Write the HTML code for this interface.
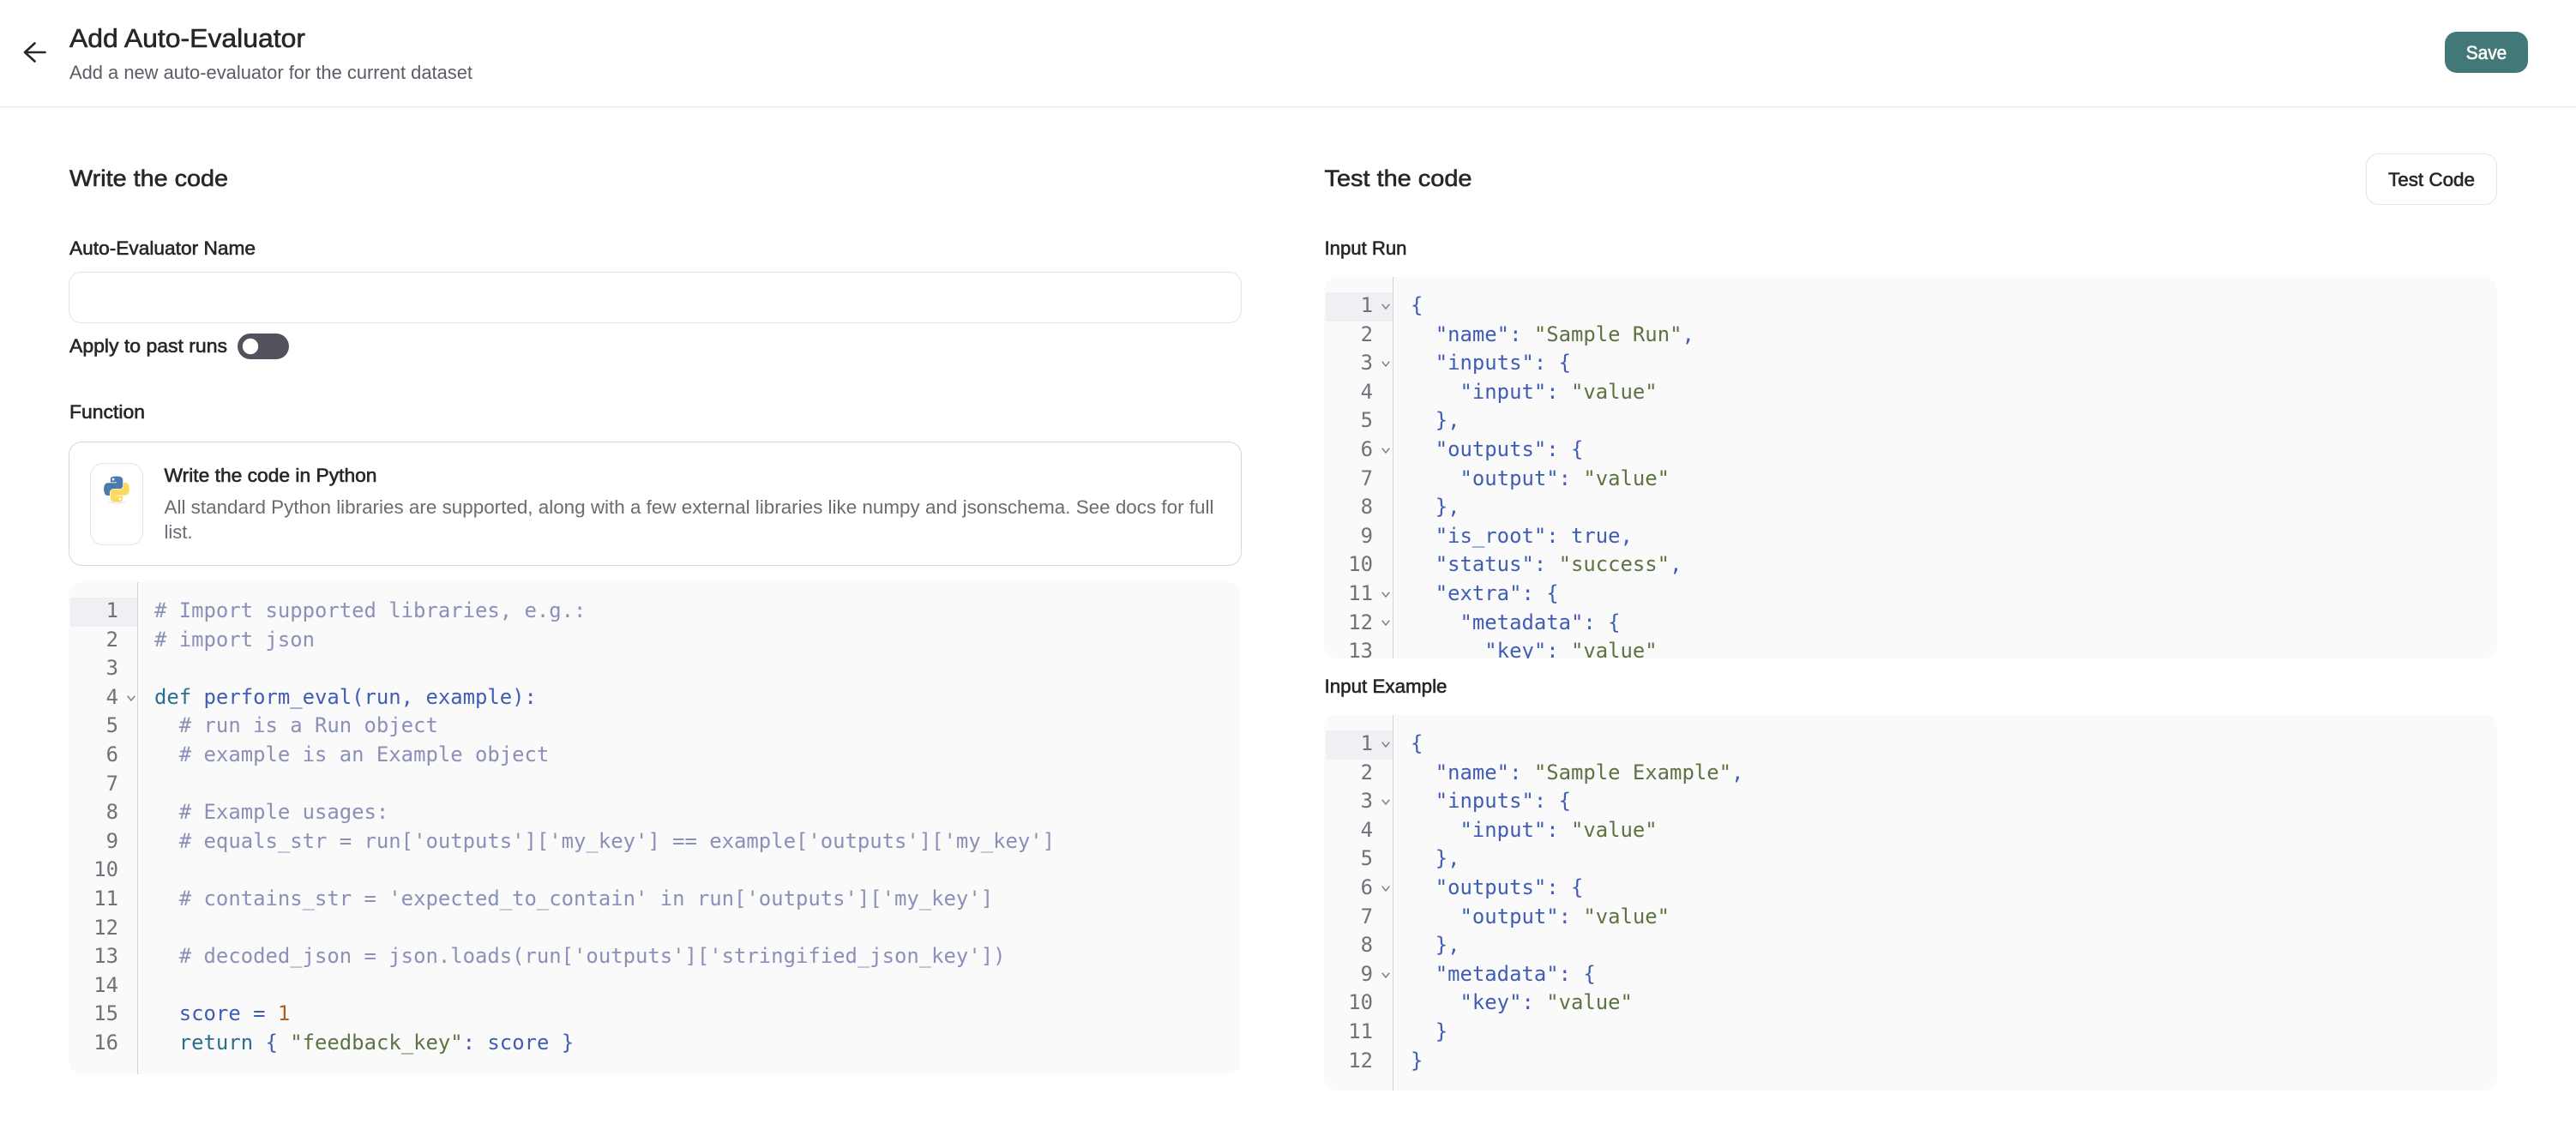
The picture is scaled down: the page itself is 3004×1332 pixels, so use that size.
<!DOCTYPE html>
<html><head><meta charset="utf-8"><title>Add Auto-Evaluator</title>
<style>
html,body{margin:0;padding:0;background:#fff;width:3004px;height:1332px;overflow:hidden}
svg.s{position:absolute;left:0;top:0}
svg text{font-family:"Liberation Sans",sans-serif;}
.m{stroke-width:.6px;paint-order:stroke}
.ed{position:absolute;background:#fafafa;border-radius:15px;overflow:hidden}
.gb{position:absolute;top:0;bottom:0;width:1px;background:#d4d4d8}
.al{position:absolute;height:34px;background:#f0f0f4}
pre{position:absolute;margin:0;font:23.9px/33.6px "DejaVu Sans Mono","Liberation Mono",monospace;white-space:pre}
.n{color:#71717a;text-align:right}
.c{color:#8a90b8}.f{color:#3f5db5}.k{color:#2b6f8f}.s1{color:#5d7344}.o{color:#b0611f}.p{color:#3f5db5}.b{color:#3f5db5}
.ch{position:absolute;width:10px;height:7px}
</style></head><body>

<div class="ed" style="left:80px;top:679px;width:1367px;height:574px">
 <div class="al" style="left:2px;top:18px;width:78px"></div>
 <div class="gb" style="left:80px"></div>
 <pre class="n" style="left:0;top:17px;width:58px">1
2
3
4
5
6
7
8
9
10
11
12
13
14
15
16</pre>
 <pre style="left:100px;top:17px"><span class="c"># Import supported libraries, e.g.:</span>
<span class="c"># import json</span>

<span class="k">def</span> <span class="f">perform_eval(run, example):</span>
  <span class="c"># run is a Run object</span>
  <span class="c"># example is an Example object</span>

  <span class="c"># Example usages:</span>
  <span class="c"># equals_str = run['outputs']['my_key'] == example['outputs']['my_key']</span>

  <span class="c"># contains_str = 'expected_to_contain' in run['outputs']['my_key']</span>

  <span class="c"># decoded_json = json.loads(run['outputs']['stringified_json_key'])</span>

  <span class="f">score</span> <span class="f">=</span> <span class="o">1</span>
  <span class="k">return</span> <span class="b">{</span> <span class="s1">"feedback_key"</span><span class="f">:</span> <span class="f">score</span> <span class="b">}</span></pre>
 <svg class="ch" style="left:68px;top:132px" viewBox="0 0 10 7"><path d="M.7.7 5 6 9.300.7" fill="none" stroke="#71717a" stroke-width="1.3"/></svg>
</div>

<div class="ed" style="left:1544px;top:323px;width:1368px;height:445px">
 <div class="al" style="left:2px;top:18px;width:78px"></div>
 <div class="gb" style="left:80px"></div>
 <pre class="n" style="left:0;top:17px;width:57px">1
2
3
4
5
6
7
8
9
10
11
12
13</pre>
 <pre class="b" style="left:101px;top:17px">{
  "name"<span class="b">:</span> <span class="s1">"Sample Run"</span>,
  "inputs": {
    "input": <span class="s1">"value"</span>
  },
  "outputs": {
    "output": <span class="s1">"value"</span>
  },
  "is_root": true,
  "status": <span class="s1">"success"</span>,
  "extra": {
    "metadata": {
      "key": <span class="s1">"value"</span></pre>
 <svg class="ch" style="left:67px;top:31px" viewBox="0 0 10 7"><path d="M.7.7 5 6 9.300.7" fill="none" stroke="#71717a" stroke-width="1.3"/></svg>
 <svg class="ch" style="left:67px;top:98px" viewBox="0 0 10 7"><path d="M.7.7 5 6 9.300.7" fill="none" stroke="#71717a" stroke-width="1.3"/></svg>
 <svg class="ch" style="left:67px;top:199px" viewBox="0 0 10 7"><path d="M.7.7 5 6 9.300.7" fill="none" stroke="#71717a" stroke-width="1.3"/></svg>
 <svg class="ch" style="left:67px;top:367px" viewBox="0 0 10 7"><path d="M.7.7 5 6 9.300.7" fill="none" stroke="#71717a" stroke-width="1.3"/></svg>
 <svg class="ch" style="left:67px;top:400px" viewBox="0 0 10 7"><path d="M.7.7 5 6 9.300.7" fill="none" stroke="#71717a" stroke-width="1.3"/></svg>
</div>

<div class="ed" style="left:1544px;top:834px;width:1368px;height:438px">
 <div class="al" style="left:2px;top:18px;width:78px"></div>
 <div class="gb" style="left:80px"></div>
 <pre class="n" style="left:0;top:17px;width:57px">1
2
3
4
5
6
7
8
9
10
11
12</pre>
 <pre class="b" style="left:101px;top:17px">{
  "name": <span class="s1">"Sample Example"</span>,
  "inputs": {
    "input": <span class="s1">"value"</span>
  },
  "outputs": {
    "output": <span class="s1">"value"</span>
  },
  "metadata": {
    "key": <span class="s1">"value"</span>
  }
}</pre>
 <svg class="ch" style="left:67px;top:31px" viewBox="0 0 10 7"><path d="M.7.7 5 6 9.300.7" fill="none" stroke="#71717a" stroke-width="1.3"/></svg>
 <svg class="ch" style="left:67px;top:98px" viewBox="0 0 10 7"><path d="M.7.7 5 6 9.300.7" fill="none" stroke="#71717a" stroke-width="1.3"/></svg>
 <svg class="ch" style="left:67px;top:199px" viewBox="0 0 10 7"><path d="M.7.7 5 6 9.300.7" fill="none" stroke="#71717a" stroke-width="1.3"/></svg>
 <svg class="ch" style="left:67px;top:300px" viewBox="0 0 10 7"><path d="M.7.7 5 6 9.300.7" fill="none" stroke="#71717a" stroke-width="1.3"/></svg>
</div>

<svg class="s" width="3004" height="1332" viewBox="0 0 3004 1332">
 <rect x="0" y="124" width="3004" height="1.5" fill="#e9e9ec"/>
 <path d="M52.500 61H30M40.500 50.500 29 61l11.500 10.500" fill="none" stroke="#27272a" stroke-width="2.6" stroke-linecap="round" stroke-linejoin="round"/>

 <rect x="2851" y="37" width="97" height="48" rx="14" fill="#437878"/>
 <rect x="2759.500" y="179.500" width="152" height="59" rx="14" fill="#fff" stroke="#e4e4e7"/>
 <rect x="80.500" y="317.500" width="1367" height="59" rx="14" fill="#fff" stroke="#e4e4e7"/>
 <rect x="277" y="389" width="60" height="30" rx="15" fill="#52525c"/>
 <circle cx="292" cy="404" r="9.200" fill="#fff"/>
 <rect x="80.500" y="515.500" width="1367" height="144" rx="15" fill="#fff" stroke="#d8d8dc"/>
 <rect x="105.500" y="540.500" width="61" height="95" rx="15" fill="#fff" stroke="#e4e4e7"/>
 <ellipse cx="136" cy="586" rx="11" ry="1.500" fill="#eee"/>
 <g transform="translate(121 555.500) scale(.2727)">
  <path fill="#4a7bab" fill-rule="evenodd" d="M54.900.001C50.300.02 45.900.41 42.100 1.090 30.800 3.080 28.800 7.260 28.800 14.960V25.140H55.300V28.530H18.800C11.100 28.530 4.300 33.160 2.200 41.970-.2 52.060-.3 58.360 2.200 68.910 4.100 76.770 8.600 82.360 16.300 82.360H25.400V70.250C25.400 61.500 33 53.780 41.900 53.780H68.400C75.700 53.780 81.600 47.750 81.600 40.390V14.960C81.600 7.780 75.500 2.390 68.400 1.200 63.800.44 59.100-.02 54.900.001ZM40.500 8.200A5 5 0 1 1 40.500 18.200 5 5 0 0 1 40.500 8.200Z"/>
  <path fill="#ffd95f" fill-rule="evenodd" transform="rotate(180 55 55)" d="M54.900.001C50.300.02 45.900.41 42.100 1.090 30.800 3.080 28.800 7.260 28.800 14.960V25.140H55.300V28.530H18.800C11.100 28.530 4.300 33.160 2.200 41.970-.2 52.060-.3 58.360 2.200 68.910 4.100 76.770 8.600 82.360 16.300 82.360H25.400V70.250C25.400 61.500 33 53.780 41.900 53.780H68.400C75.700 53.780 81.600 47.750 81.600 40.390V14.960C81.600 7.780 75.500 2.390 68.400 1.200 63.800.44 59.100-.02 54.900.001ZM40.500 8.200A5 5 0 1 1 40.500 18.200 5 5 0 0 1 40.500 8.200Z"/>
 </g>

 <g fill="#27272a" stroke="#27272a">
  <text class="m" x="81" y="55" font-size="31" textLength="275" lengthAdjust="spacingAndGlyphs">Add Auto-Evaluator</text>
  <text class="m" x="81" y="217" font-size="27" textLength="185" lengthAdjust="spacingAndGlyphs">Write the code</text>
  <text class="m" x="1544.500" y="217" font-size="27" textLength="172" lengthAdjust="spacingAndGlyphs">Test the code</text>
  <text class="m" x="81" y="297" font-size="22" textLength="217" lengthAdjust="spacingAndGlyphs">Auto-Evaluator Name</text>
  <text class="m" x="81" y="411" font-size="22" textLength="184" lengthAdjust="spacingAndGlyphs">Apply to past runs</text>
  <text class="m" x="81" y="488" font-size="22" textLength="88" lengthAdjust="spacingAndGlyphs">Function</text>
  <text class="m" x="191.500" y="562" font-size="22" textLength="248" lengthAdjust="spacingAndGlyphs">Write the code in Python</text>
  <text class="m" x="1544.500" y="297" font-size="22" textLength="96" lengthAdjust="spacingAndGlyphs">Input Run</text>
  <text class="m" x="1544.500" y="808" font-size="22" textLength="143" lengthAdjust="spacingAndGlyphs">Input Example</text>
 </g>
 <text x="81" y="92" font-size="22" fill="#5c5c66" textLength="470" lengthAdjust="spacingAndGlyphs">Add a new auto-evaluator for the current dataset</text>
 <text x="191.500" y="599" font-size="22" fill="#6b6b75" textLength="1224" lengthAdjust="spacingAndGlyphs">All standard Python libraries are supported, along with a few external libraries like numpy and jsonschema. See docs for full</text>
 <text x="191.500" y="628" font-size="22" fill="#6b6b75" textLength="33" lengthAdjust="spacingAndGlyphs">list.</text>
 <text class="m" x="2875.700" y="69" font-size="22" fill="#fff" stroke="#fff" textLength="47.600" lengthAdjust="spacingAndGlyphs">Save</text>
 <text class="m" x="2785" y="217" font-size="22" fill="#27272a" stroke="#27272a" textLength="101" lengthAdjust="spacingAndGlyphs">Test Code</text>
</svg>
</body></html>
